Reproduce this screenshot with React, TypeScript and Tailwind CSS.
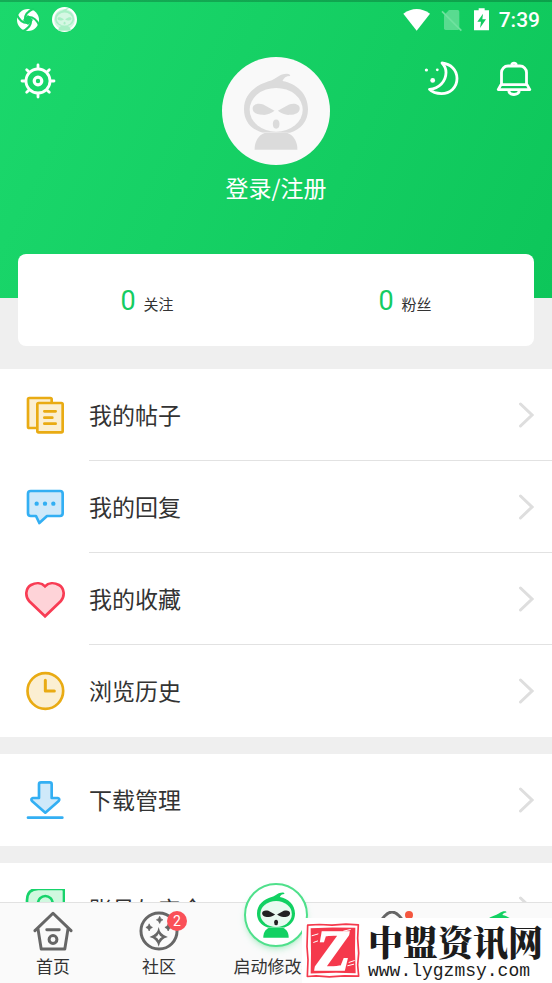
import type { ReactNode } from 'react'

const FONT = 'font-["Noto_Sans_CJK_SC",sans-serif]'

type MascotProps = {
  className: string
  hood: string
  face: string
  eyes: string
}

function Mascot({ className, hood, face, eyes }: MascotProps) {
  return (
    <svg viewBox="132 94 193 230" className={className} aria-hidden="true">
      <path
        fill={hood}
        d="M187 272C150 262 132 235 132 202C132 155 168 130 206 118C230 111 238 95 262 95C268 95 272 98 271 102C259 102 252 108 248 117C290 125 325 155 325 202C325 238 304 262 271 273Z"
      />
      <path fill={hood} d="M164 324C164 298 176 281 194 274H263C281 281 293 298 293 324Z" />
      <ellipse cx="229" cy="204" rx="80" ry="66" fill={face} />
      <g fill={eyes}>
        <path d="M158 200C158 186 176 183 190 188L224 207C212 217 200 220 188 219C170 219 158 212 158 200Z" />
        <path d="M300 200C300 186 282 183 268 188L234 207C246 217 258 220 270 219C288 219 300 212 300 200Z" />
        <ellipse cx="229" cy="247" rx="10" ry="14" />
      </g>
    </svg>
  )
}

function StatusBar() {
  return (
    <div className="flex h-[37px] items-center justify-between border-t-2 border-black/20 pr-3 pl-4">
      <div className="flex items-center gap-3">
        <svg viewBox="0 0 24 24" className="size-6" aria-hidden="true">
          <circle cx="12" cy="12" r="11" fill="white" />
          <g fill="none" stroke="#19d368" strokeWidth="2.2">
            <path fill="#19d368" d="M12 8.500L15.500 12L12 15.500L8.500 12Z" />
            {[0, 90, 180, 270].map((angle) => (
              <path key={angle} transform={`rotate(${angle} 12 12)`} d="M9 11C9 6 12 3 18 0.500" />
            ))}
          </g>
        </svg>
        <div className="flex size-[25px] items-center justify-center rounded-full border-2 border-white bg-white/80">
          <Mascot className="h-[23px] w-[19px]" hood="#a9efc6" face="#d5f7e3" eyes="#a9efc6" />
        </div>
      </div>
      <div className="flex items-center gap-2.5 text-white">
        <svg viewBox="36 20 81 72" className="h-6 w-[27px]" fill="white" aria-hidden="true">
          <path d="M37 37Q77 9 117 37L77 88Z" />
        </svg>
        <svg viewBox="140 20 72 72" className="size-6" aria-hidden="true">
          <path
            fill="white"
            opacity=".3"
            d="M167 26h26q5 0 5 5v50q0 5-5 5h-36q-5 0-5-5V42z"
          />
          <path stroke="#6fe29f" strokeWidth="5" d="M146 30L204 88" />
        </svg>
        <svg viewBox="246 20 45 69" className="h-[23px] w-[15px]" aria-hidden="true">
          <path fill="white" d="M260 21h18v6h13v60h-45V27h14z" />
          <path fill="#12ca60" d="M273 37L256 61h11l-3 19 18-26h-11z" />
        </svg>
        <span className="font-[Roboto,sans-serif] text-[21px] leading-6 font-medium">7:39</span>
      </div>
    </div>
  )
}

function GearIcon() {
  return (
    <svg
      viewBox="0 0 36 36"
      className="size-9"
      fill="none"
      stroke="white"
      strokeWidth="2.8"
      strokeLinecap="round"
      aria-hidden="true"
    >
      <circle cx="18" cy="18" r="12" />
      <circle cx="18" cy="18" r="3.8" strokeWidth="3.2" />
      {[0, 45, 90, 135, 180, 225, 270, 315].map((angle) => (
        <path key={angle} d="M18 5V2" transform={`rotate(${angle} 18 18)`} />
      ))}
    </svg>
  )
}

function MoonIcon() {
  return (
    <svg viewBox="0 0 36 36" className="size-9" aria-hidden="true">
      <path
        fill="none"
        stroke="white"
        strokeWidth="2.8"
        strokeLinejoin="round"
        d="M18 3C27 4 33 10 33 18.500C33 27.500 26 33.600 17.500 33.600C12 33.600 8 32 5.500 29.300C15 28.500 22 21.500 22 12.500C22 9 20.500 5.500 18 3Z"
      />
      <g fill="white">
        <circle cx="2.400" cy="10" r="1.600" />
        <circle cx="13.300" cy="9.800" r="1.400" />
        <circle cx="8.700" cy="20.400" r="2.400" />
      </g>
    </svg>
  )
}

function BellIcon() {
  return (
    <svg
      viewBox="0 0 36 36"
      className="size-9"
      fill="none"
      stroke="white"
      strokeWidth="2.8"
      strokeLinejoin="round"
      aria-hidden="true"
    >
      <path d="M5.500 24V12.500a6.500 6.500 0 0 1 6.500-6.500h12a6.500 6.500 0 0 1 6.500 6.500V24" />
      <path d="M5 24.600h26l2.800 5H2.200z" />
      <path d="M15.500 5a2.600 2.600 0 0 1 5 0M12.500 31c1 2.500 3 3.500 5.500 3.500s4.500-1 5.500-3.500" />
    </svg>
  )
}

function Header() {
  return (
    <header className="h-[298px] bg-linear-115 from-[#1bd86c] to-[#0dc65a]">
      <StatusBar />
      <div className="grid grid-cols-[1fr_auto_1fr] items-start px-5 pt-5">
        <div className="flex pt-1.5">
          <button type="button" aria-label="设置">
            <GearIcon />
          </button>
        </div>
        <a href="#login" className="flex flex-col items-center text-white">
          <span className="flex size-[108px] items-center justify-center rounded-full bg-[#f9f9f9]">
            <Mascot className="h-[77px] w-16" hood="#dbdbdb" face="#f9f9f9" eyes="#dbdbdb" />
          </span>
          <span className="mt-1 text-[23px] leading-9">登录/注册</span>
        </a>
        <div className="flex justify-end gap-9 pt-[3px]">
          <button type="button" aria-label="夜间模式">
            <MoonIcon />
          </button>
          <button type="button" aria-label="通知">
            <BellIcon />
          </button>
        </div>
      </div>
    </header>
  )
}

function Stat({ value, label }: { value: number; label: string }) {
  return (
    <a href="#stat" className="flex flex-1 items-baseline justify-center gap-2 pt-1">
      <span className="font-[Roboto,sans-serif] text-[27px] leading-8 text-[#14cc62]">{value}</span>
      <span className="text-[15px] leading-8 text-[#333]">{label}</span>
    </a>
  )
}

function MenuIcon({ viewBox, color, tint, children }: { viewBox: string; color: string; tint: string; children: ReactNode }) {
  return (
    <svg
      viewBox={viewBox}
      className="size-10 shrink-0"
      fill={tint}
      stroke={color}
      strokeWidth="8"
      strokeLinecap="round"
      strokeLinejoin="round"
      aria-hidden="true"
    >
      {children}
    </svg>
  )
}

const postsIcon = (
  <MenuIcon viewBox="75 43 120 120" color="#e9ab13" tint="#fbefd2">
    <rect x="84" y="52" width="71" height="90" rx="4" />
    <rect x="112" y="67" width="76" height="88" rx="4" />
    <path d="M133 92h34M133 111h24M133 129h34" />
  </MenuIcon>
)

const replyIcon = (
  <MenuIcon viewBox="75 319 120 120" color="#33aff3" tint="#cfe9fa">
    <path d="M92 331h88q8 0 8 8v59q0 8-8 8h-39L118 427L108 406H92q-8 0-8-8v-59q0-8 8-8z" />
    <g fill="#33aff3" stroke="none">
      <circle cx="110" cy="369" r="6.500" />
      <circle cx="135" cy="369" r="6.500" />
      <circle cx="160" cy="369" r="6.500" />
    </g>
  </MenuIcon>
)

const heartIcon = (
  <MenuIcon viewBox="75 55 120 120" color="#f83c54" tint="#fed3d8">
    <path
      strokeLinejoin="miter"
      d="M135 167L88 122C74 106 77 82 93 73C108 65 125 66 135 77C145 66 162 65 177 73C193 82 196 106 182 122Z"
    />
  </MenuIcon>
)

const clockIcon = (
  <MenuIcon viewBox="75 333 120 120" color="#e9ab13" tint="#fbefd2">
    <circle cx="136" cy="393" r="53.500" />
    <path fill="none" strokeWidth="9" d="M136 361V393H163" />
  </MenuIcon>
)

const downloadIcon = (
  <MenuIcon viewBox="75 660 120 120" color="#33aff3" tint="#cfe9fa">
    <path d="M123 667h26q6 0 6 6v41h18q8 2 3 9L136 758L96 723q-5-7 3-9h18v-41q0-6 6-6z" />
    <path d="M84 773h103" />
  </MenuIcon>
)

const accountIcon = (
  <MenuIcon viewBox="75 150 120 120" color="#17d36b" tint="#d0f8df">
    <path d="M81 245V184Q81 150 115 150H186q6 0 6 6V218Q192 252 158 252H88q-7 0-7-7z" />
    <circle cx="136" cy="193" r="22" />
  </MenuIcon>
)

const menuGroups = [
  [
    { label: '我的帖子', icon: postsIcon },
    { label: '我的回复', icon: replyIcon },
    { label: '我的收藏', icon: heartIcon },
    { label: '浏览历史', icon: clockIcon },
  ],
  [{ label: '下载管理', icon: downloadIcon }],
  [{ label: '账号与安全', icon: accountIcon }],
]

function MenuRow({ label, icon }: { label: string; icon: ReactNode }) {
  return (
    <li className="group">
      <a href="#menu" className="flex h-[92px] items-center gap-6 pl-[25px]">
        {icon}
        <span className="flex h-full flex-1 items-center justify-between border-b border-[#e2e2e2] pr-[18px] group-last:border-transparent">
          <span className="pb-0.5 text-[23px] leading-8 text-[#333]">{label}</span>
          <svg
            viewBox="0 0 16 28"
            className="h-7 w-4"
            fill="none"
            stroke="#dedede"
            strokeWidth="3"
            strokeLinecap="round"
            aria-hidden="true"
          >
            <path d="M2.500 3L14 14L2.500 25" />
          </svg>
        </span>
      </a>
    </li>
  )
}

function HomeIcon() {
  return (
    <svg
      viewBox="98 211 122 122"
      className="size-10"
      fill="none"
      stroke="#666"
      strokeWidth="9"
      strokeLinecap="round"
      strokeLinejoin="round"
      aria-hidden="true"
    >
      <path d="M104 271L159 218L214 271M113 264L123 327H195L205 264M140 268h38" />
      <circle cx="159" cy="298" r="12" />
    </svg>
  )
}

function CommunityIcon() {
  return (
    <svg viewBox="416 211 122 122" className="size-10" fill="#666" aria-hidden="true">
      <circle cx="477" cy="272" r="55" fill="none" stroke="#666" strokeWidth="9" />
      <path d="M479 227Q481 236 489 238Q481 240 479 249Q477 240 469 238Q477 236 479 227Z" stroke="#666" strokeWidth="2" />
      <path d="M447 250Q449 259 457 261Q449 263 447 272Q445 263 437 261Q445 259 447 250Z" stroke="#666" strokeWidth="2" />
      <path d="M505 250Q507 259 515 261Q507 263 505 272Q503 263 495 261Q503 259 505 250Z" stroke="#666" strokeWidth="2" />
      <path
        fillRule="evenodd"
        d="M476 260Q480 284 504 290Q480 296 476 320Q472 296 448 290Q472 284 476 260ZM476 280Q473 288 466 290Q473 292 476 300Q479 292 486 290Q479 288 476 280Z"
      />
    </svg>
  )
}

function ArchIcon() {
  return (
    <svg
      viewBox="0 0 40 40"
      className="size-10"
      fill="none"
      stroke="#666"
      strokeWidth="3"
      strokeLinecap="round"
      aria-hidden="true"
    >
      <path d="M5 14Q13 1 19 1Q25 1 33 14V36H5Z" />
    </svg>
  )
}

function TabBar() {
  const tab = 'flex flex-1 flex-col items-center pt-2'
  const label = 'mt-[3px] text-[17px] leading-6 text-[#333]'

  return (
    <nav className="relative flex h-[81px] shrink-0 border-t border-[#e2e2e2] bg-[#fafafa]">
      <button type="button" className={tab}>
        <HomeIcon />
        <span className={label}>首页</span>
      </button>
      <button type="button" className={tab}>
        <span className="relative">
          <CommunityIcon />
          <span className="absolute top-0 -right-2 size-5 rounded-full bg-[#fa5058] text-center font-[Roboto,sans-serif] text-sm leading-5 text-white">
            2
          </span>
        </span>
        <span className={label}>社区</span>
      </button>
      <button type="button" className="-mt-5 flex w-32 flex-col items-center">
        <span className="flex size-16 items-center justify-center rounded-full border-2 border-[#4fe08b] bg-white shadow-md shadow-green-500/20">
          <Mascot className="h-[46px] w-[38px]" hood="#12d162" face="#e9faf0" eyes="#222" />
        </span>
        <span className="mt-[7px] text-[17px] leading-6 whitespace-nowrap text-[#333]">启动修改器</span>
      </button>
      <button type="button" className={tab} aria-label="发现">
        <span className="relative">
          <ArchIcon />
          <span className="absolute top-0 right-0 size-2 rounded-full bg-[#f4573f]" />
        </span>
      </button>
      <button type="button" className={tab} aria-label="我的">
        <Mascot className="h-10 w-[34px]" hood="#12d162" face="#e9faf0" eyes="#12d162" />
      </button>
      <Watermark />
    </nav>
  )
}

function Watermark() {
  return (
    <div className="absolute right-0 bottom-0 flex h-[65px] w-[250px] items-center gap-2 bg-white pl-1">
      <svg viewBox="0 0 162 164" className="h-[55px] w-[54px] shrink-0" aria-hidden="true">
        <path
          fill="none"
          stroke="#f5394c"
          strokeWidth="5"
          strokeLinejoin="round"
          d="M5 6L40 4L78 6L120 3L157 5L155 45L158 90L155 125L158 159L115 158L70 161L30 158L4 160L6 110L3 70Z"
        />
        <path fill="#f5394c" d="M14 15L80 13L148 14L147 80L149 150L90 149L14 151L15 90Z" />
        <path fill="none" stroke="white" strokeWidth="3" d="M17 38l20-6M22 58l14-5M128 118l18-6M124 128l20-5M112 24l22-5" />
        <text
          x="80"
          y="141"
          textAnchor="middle"
          fill="white"
          stroke="white"
          strokeWidth="5"
          className="font-['Liberation_Serif',serif] text-[172px] font-bold italic"
        >
          Z
        </text>
      </svg>
      <div className="flex flex-col text-[#1c1c1c]">
        <span className='font-["Noto_Serif_CJK_SC","Noto_Sans_CJK_SC",serif] text-[35px] leading-10 font-black whitespace-nowrap'>
          中盟资讯网
        </span>
        <span className="font-['Liberation_Mono',monospace] text-lg leading-5">www.lygzmsy.com</span>
      </div>
    </div>
  )
}

export default function App() {
  return (
    <div className={`flex h-screen flex-col overflow-hidden bg-[#efefef] ${FONT}`}>
      <main className="min-h-0 flex-1 overflow-y-auto [scrollbar-width:none]">
        <Header />
        <section className="mx-[18px] -mt-11 mb-[23px] flex h-[92px] items-center rounded-lg bg-white">
          <Stat value={0} label="关注" />
          <Stat value={0} label="粉丝" />
        </section>
        <div className="flex flex-col gap-[17px]">
          {menuGroups.map((group) => (
            <ul key={group[0].label} className="bg-white">
              {group.map((item) => (
                <MenuRow key={item.label} {...item} />
              ))}
            </ul>
          ))}
        </div>
      </main>
      <TabBar />
    </div>
  )
}
